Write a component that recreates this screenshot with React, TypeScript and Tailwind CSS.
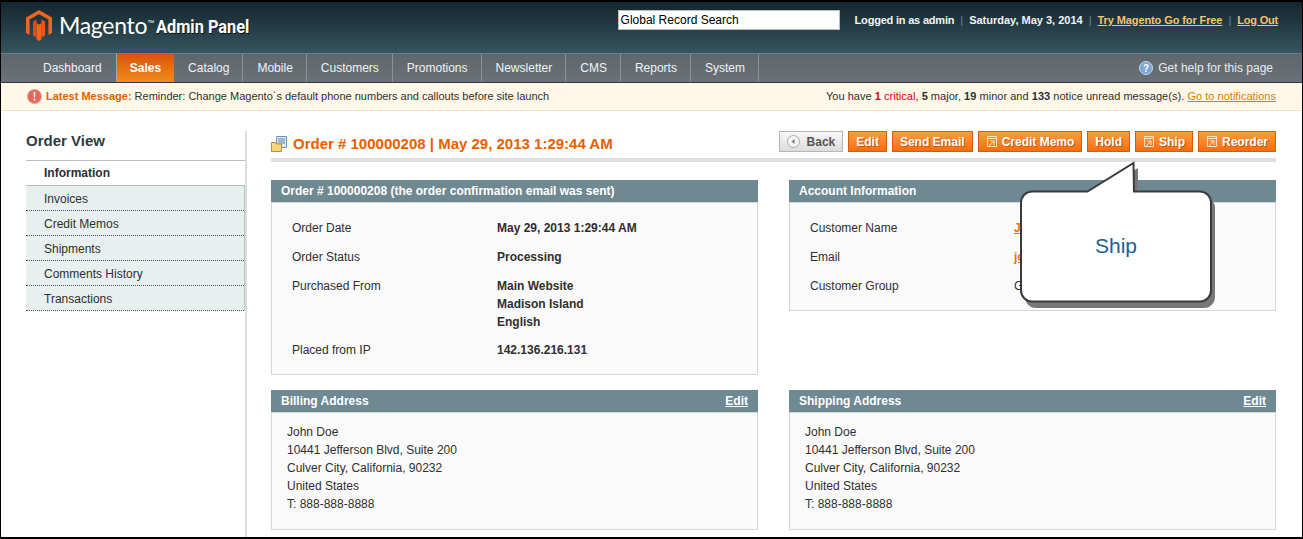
const navItems = ["Catalog", "Mobile", "Customers", "Promotions", "Newsletter", "CMS", "Reports", "System"];
const sideItems = ["Invoices", "Credit Memos", "Shipments", "Comments History", "Transactions"];

function Logo() {
  return (
    <svg width="26" height="31" viewBox="0 0 26 31" className="shrink-0">
      <path d="M13 0 26 7.500V23l-3.600 2V9.600L13 4.200 3.600 9.600V25L0 23V7.500Z" fill="#f26322" />
      <path d="M7 11.400 10.600 9.400V27.500L7 25.400Z" fill="#e5481b" />
      <path d="M19 11.400 15.400 9.400V27.500L19 25.400Z" fill="#f4511e" />
      <path d="M10.600 13.200 13 14.600l2.400-1.400V29.600L13 31l-2.400-1.400Z" fill="#f26322" />
    </svg>
  );
}

function ActionIcon() {
  return (
    <svg width="12" height="13" viewBox="0 0 12 13" className="shrink-0" fill="none" stroke="#ffe2c0" strokeWidth="1">
      <path d="M1.500 1.500h9v10h-9z" />
      <path d="M1.500 3.500h9" />
      <path d="M4 6h4v4M8 6 3 11" />
    </svg>
  );
}

function ActionButton({ label, icon }: { label: string; icon?: boolean }) {
  return (
    <button className="flex h-[21px] items-center gap-[4px] border border-[#d85a0c] bg-gradient-to-b from-[#ff9d3c] to-[#f66c0b] px-[7px] text-xs font-bold text-white [text-shadow:1px_1px_0_#c8560a]">
      {icon && <ActionIcon />}
      {label}
    </button>
  );
}

function BoxHead({ title, edit }: { title: string; edit?: boolean }) {
  return (
    <div className="flex h-[22px] items-center justify-between bg-[#6f8992] px-[10px] text-xs font-bold text-white">
      <span>{title}</span>
      {edit && <span className="underline">Edit</span>}
    </div>
  );
}

function Row({ label, children, offset }: { label: string; children: React.ReactNode; offset: string }) {
  return (
    <div className={`grid ${offset} leading-[18px]`}>
      <span>{label}</span>
      <div>{children}</div>
    </div>
  );
}

function Address({ title }: { title: string }) {
  return (
    <section>
      <BoxHead title={title} edit />
      <div className="h-[118px] border border-[#d6d6d6] bg-[#fafafa] pl-[15px] pt-[10px] leading-[18px]">
        <p>John Doe</p>
        <p>10441 Jefferson Blvd, Suite 200</p>
        <p>Culver City, California, 90232</p>
        <p>United States</p>
        <p>T: 888-888-8888</p>
      </div>
    </section>
  );
}

export default function App() {
  return (
    <div className="relative h-[539px] w-[1303px] overflow-hidden border-x border-t-2 border-b-2 border-black bg-white font-['Liberation_Sans',Arial,sans-serif] text-xs text-[#2f2f2f]">
      {/* Header */}
      <header className="flex h-[51px] items-start bg-gradient-to-b from-[#14262d] to-[#365560] pl-[25px] pr-[24px]">
        <div className="mt-[8px] flex items-center">
          <Logo />
          <span className="ml-[7px] font-['Lato',sans-serif] text-[23px] leading-[31px] tracking-[-0.3px] text-white">Magento</span>
          <span className="mb-[6px] text-[7px] text-white">™</span>
          <span className="ml-[2px] mt-[3px] origin-left font-['Roboto',sans-serif] text-[19px] font-bold leading-[24px] text-white [text-shadow:1px_1px_0_#111] [transform:scaleX(0.86)]">Admin Panel</span>
        </div>
        <div className="ml-auto mt-[8px] flex items-center">
          <div className="h-[20px] w-[222px] border border-[#b8bdc0] bg-white pl-[2px] leading-[18px] text-black">Global Record Search</div>
          <div className="ml-[15px] flex items-center gap-[6px] text-[11px] font-bold text-[#f0f4f5]">
            <span className="tracking-[-0.2px]">Logged in as admin</span>
            <span className="font-normal text-[#71868e]">|</span>
            <span>Saturday, May 3, 2014</span>
            <span className="font-normal text-[#71868e]">|</span>
            <span className="tracking-[-0.1px] text-[#f6c36f] underline">Try Magento Go for Free</span>
            <span className="font-normal text-[#71868e]">|</span>
            <span className="tracking-[-0.2px] text-[#f6c36f] underline">Log Out</span>
          </div>
        </div>
      </header>

      {/* Nav */}
      <nav className="flex h-[30px] items-stretch border-t border-[#64808a] border-b border-b-[#2e3a40] bg-gradient-to-b from-[#5f676c] to-[#6b7176] pl-[29px] pr-[29px] font-normal text-[#eef3f6]">
        <span className="flex items-center border-r border-[#a3a8ab] pl-[13px] pr-[14px]">Dashboard</span>
        <span className="flex items-center bg-gradient-to-b from-[#d9520f] to-[#ef8c1b] px-[13px] font-bold text-white">Sales</span>
        {navItems.map((item) => (
          <span key={item} className="flex items-center border-r border-[#8b9195] pl-[14px] pr-[13px]">
            {item}
          </span>
        ))}
        <span className="ml-auto flex items-center gap-[5px] text-[#e6ebee]">
          <svg width="14" height="14" viewBox="0 0 14 14">
            <circle cx="7" cy="7" r="6.500" fill="#7ea6d3" stroke="#c5d9ee" />
            <text x="7" y="10.500" textAnchor="middle" fontSize="10" fontWeight="700" fill="#fff" fontFamily="Liberation Sans">?</text>
          </svg>
          Get help for this page
        </span>
      </nav>

      {/* Notification bar */}
      <div className="flex h-[28px] items-center justify-between border-b border-[#efe3bf] bg-[#fff8e8] pl-[26px] pr-[26px] text-[11px] text-[#2f2f2f]">
        <div className="flex items-center">
          <svg width="15" height="15" viewBox="0 0 15 15" className="mr-[4px]">
            <circle cx="7.500" cy="7.500" r="7" fill="#e8655a" stroke="#d8a9a0" />
            <path d="M6.600 3h1.800l-.3 5.800H6.900Z" fill="#fff" />
            <circle cx="7.500" cy="10.800" r="1" fill="#fff" />
          </svg>
          <span className="mr-[3px] font-bold text-[#eb5e00]">Latest Message:</span>
          <span>Reminder: Change Magento`s default phone numbers and callouts before site launch</span>
        </div>
        <div className="tracking-[0.03px]">
          You have <b className="text-[#d6001c]">1</b> <span className="text-[#d6001c]">critical</span>, <b>5</b> major, <b>19</b> minor and <b>133</b> notice unread message(s).{" "}
          <span className="text-[#ea7601] underline">Go to notifications</span>
        </div>
      </div>

      {/* Page body */}
      <div className="flex pl-[25px] pr-[26px] pt-[20px]">
        <aside className="h-[410px] w-[221px] shrink-0 border-r-[2px] border-[#dcdcdc]">
          <h3 className="h-[29px] text-[15px] font-bold leading-[20px] text-[#2f3a40]">Order View</h3>
          <div className="h-[26px] border-y border-[#bcbcbc] pl-[18px] font-bold leading-[24px]">Information</div>
          <ul className="border-r border-[#b9c6c6] bg-[#e7efef]">
            {sideItems.map((item) => (
              <li key={item} className="h-[25px] border-b border-dotted border-[#555] pl-[18px] leading-[26px]">
                {item}
              </li>
            ))}
          </ul>
        </aside>

        <main className="ml-[24px] min-w-0 flex-1">
          <div className="flex h-[31px] items-start justify-between border-b-[4px] border-[#dfdfdf]">
            <div className="mt-[3px] flex items-center gap-[6px]">
              <svg width="16" height="16" viewBox="0 0 16 16">
                <path d="M5.500.5h10v11h-10z" fill="#dfeaf5" stroke="#6d92b8" />
                <path d="M7 3h7M7 5h7M7 7h7" stroke="#5f87ae" />
                <path d="M.5 6.500h4l1 1.500h5v7.500h-10z" fill="#f7d77c" stroke="#b98f30" />
              </svg>
              <span className="text-[15px] font-bold text-[#eb5e00]">Order # 100000208 | May 29, 2013 1:29:44 AM</span>
            </div>
            <div className="flex gap-[5px]">
              <button className="flex h-[21px] items-center gap-[7px] border border-[#b6b6b6] bg-gradient-to-b from-[#f8f8f8] to-[#dcdcdc] px-[7px] text-xs font-bold text-[#555]">
                <svg width="13" height="13" viewBox="0 0 13 13">
                  <circle cx="6.500" cy="6.500" r="6" fill="#f4f4f4" stroke="#a9a9a9" />
                  <path d="M7.500 4v5L4.500 6.500Z" fill="#777" />
                </svg>
                Back
              </button>
              <ActionButton label="Edit" />
              <ActionButton label="Send Email" />
              <ActionButton label="Credit Memo" icon />
              <ActionButton label="Hold" />
              <ActionButton label="Ship" icon />
              <ActionButton label="Reorder" icon />
            </div>
          </div>

          <div className="mt-[18px] grid grid-cols-2 items-start gap-x-[31px] gap-y-[15px]">
            <section>
              <BoxHead title="Order # 100000208 (the order confirmation email was sent)" />
              <div className="flex h-[173px] flex-col gap-[11px] border border-[#d6d6d6] bg-[#fafafa] pl-[20px] pt-[16px]">
                <Row label="Order Date" offset="grid-cols-[205px_1fr]"><b>May 29, 2013 1:29:44 AM</b></Row>
                <Row label="Order Status" offset="grid-cols-[205px_1fr]"><b>Processing</b></Row>
                <Row label="Purchased From" offset="grid-cols-[205px_1fr]"><b>Main Website<br />Madison Island<br />English</b></Row>
                <div className="-mt-[1px]">
                  <Row label="Placed from IP" offset="grid-cols-[205px_1fr]"><b>142.136.216.131</b></Row>
                </div>
              </div>
            </section>
            <section>
              <BoxHead title="Account Information" />
              <div className="flex h-[109px] flex-col gap-[11px] border border-[#d6d6d6] bg-[#fafafa] pl-[20px] pt-[16px]">
                <Row label="Customer Name" offset="grid-cols-[204px_1fr]"><span className="font-bold text-[#ea7601] underline">John Doe</span></Row>
                <Row label="Email" offset="grid-cols-[204px_1fr]"><span className="font-bold text-[#ea7601] underline">johndoe@example.com</span></Row>
                <Row label="Customer Group" offset="grid-cols-[204px_1fr]"><span>General</span></Row>
              </div>
            </section>
            <Address title="Billing Address" />
            <Address title="Shipping Address" />
          </div>
        </main>
      </div>

      {/* Callout over the Ship button */}
      <div className="absolute left-[1017px] top-[158px] h-[150px] w-[200px]">
        <svg width="200" height="150" viewBox="0 0 200 150" className="absolute inset-0">
          <path d="M14 33h55L116 4v29h66a11 11 0 0 1 11 11v89a11 11 0 0 1-11 11H14a11 11 0 0 1-11-11V44a11 11 0 0 1 11-11Z" fill="#777" transform="translate(4 4)" />
          <path d="M14 31.500h55.500L115.500 3l.5 28.500h66a11 11 0 0 1 11 11v88a11 11 0 0 1-11 11H14a11 11 0 0 1-11-11v-88a11 11 0 0 1 11-11Z" fill="#fff" stroke="#3a3a3a" strokeWidth="2" />
        </svg>
        <span className="absolute left-[3px] top-[31px] flex h-[110px] w-[190px] items-center justify-center text-[21px] text-[#1c5f8e]">Ship</span>
      </div>
    </div>
  );
}
